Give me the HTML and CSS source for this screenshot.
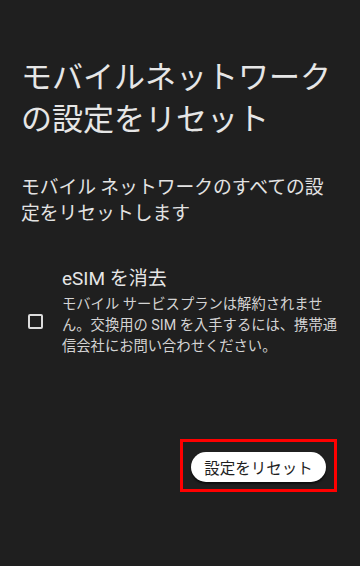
FILE: index.html
```html
<!DOCTYPE html>
<html lang="ja">
<head>
<meta charset="utf-8">
<link rel="stylesheet" href="styles.css">
</head>
<body>
<main class="page">
  <h1 class="title">モバイルネットワークの設定をリセット</h1>
  <p class="subtitle">モバイル ネットワークのすべての設定をリセットします</p>
  <div class="option">
    <span class="checkbox"></span>
    <div class="option-text">
      <div class="option-label">eSIM を消去</div>
      <div class="option-desc">モバイル サービスプランは解約されません。交換用の SIM を入手するには、携帯通信会社にお問い合わせください。</div>
    </div>
  </div>
  <div class="actions">
    <div class="highlight">
      <button class="reset-btn">設定をリセット</button>
    </div>
  </div>
</main>
</body>
</html>
```
FILE: styles.css
```css
html, body {
  margin: 0;
  padding: 0;
  background: #1f1f1f;
}
body {
  width: 360px;
  height: 566px;
  overflow: hidden;
  font-family: Roboto, "Noto Sans CJK JP", sans-serif;
}
.page {
  display: flex;
  flex-direction: column;
}
.title {
  margin: 54px 24px 0 21px;
  font-family: "Noto Sans CJK JP", sans-serif;
  font-weight: 400;
  font-size: 31px;
  line-height: 42px;
  color: #e6e6e6;
}
.subtitle {
  margin: 35px 24px 0 21px;
  font-family: "Noto Sans CJK JP", sans-serif;
  font-size: 18.8px;
  line-height: 26px;
  color: #e3e3e3;
}
.option {
  display: flex;
  margin-top: 42px;
  padding: 0 18px 0 28px;
}
.checkbox {
  flex: none;
  box-sizing: border-box;
  width: 15px;
  height: 15px;
  margin-top: 47px;
  border: 2px solid #dcdcdc;
  border-radius: 2px;
}
.option-text {
  margin-left: 19px;
  flex: 1;
}
.option-label {
  font-size: 19px;
  line-height: 24px;
  color: #e6e6e6;
}
.option-desc {
  margin-top: 3px;
  font-size: 14.3px;
  line-height: 21px;
  color: #d4d4d4;
}
.actions {
  display: flex;
  justify-content: flex-end;
  padding-right: 23px;
  margin-top: 82px;
}
.highlight {
  border: 3px solid #ff0000;
  padding: 10px 8px 7px 8px;
}
.reset-btn {
  display: block;
  width: 135px;
  height: 30px;
  padding: 0;
  border: none;
  border-radius: 15px;
  background: #ffffff;
  color: #1f1f1f;
  font-family: "Noto Sans CJK JP", sans-serif;
  font-size: 15.5px;
  box-shadow: 0 2px 2px rgba(0, 0, 0, 0.6);
}
```
